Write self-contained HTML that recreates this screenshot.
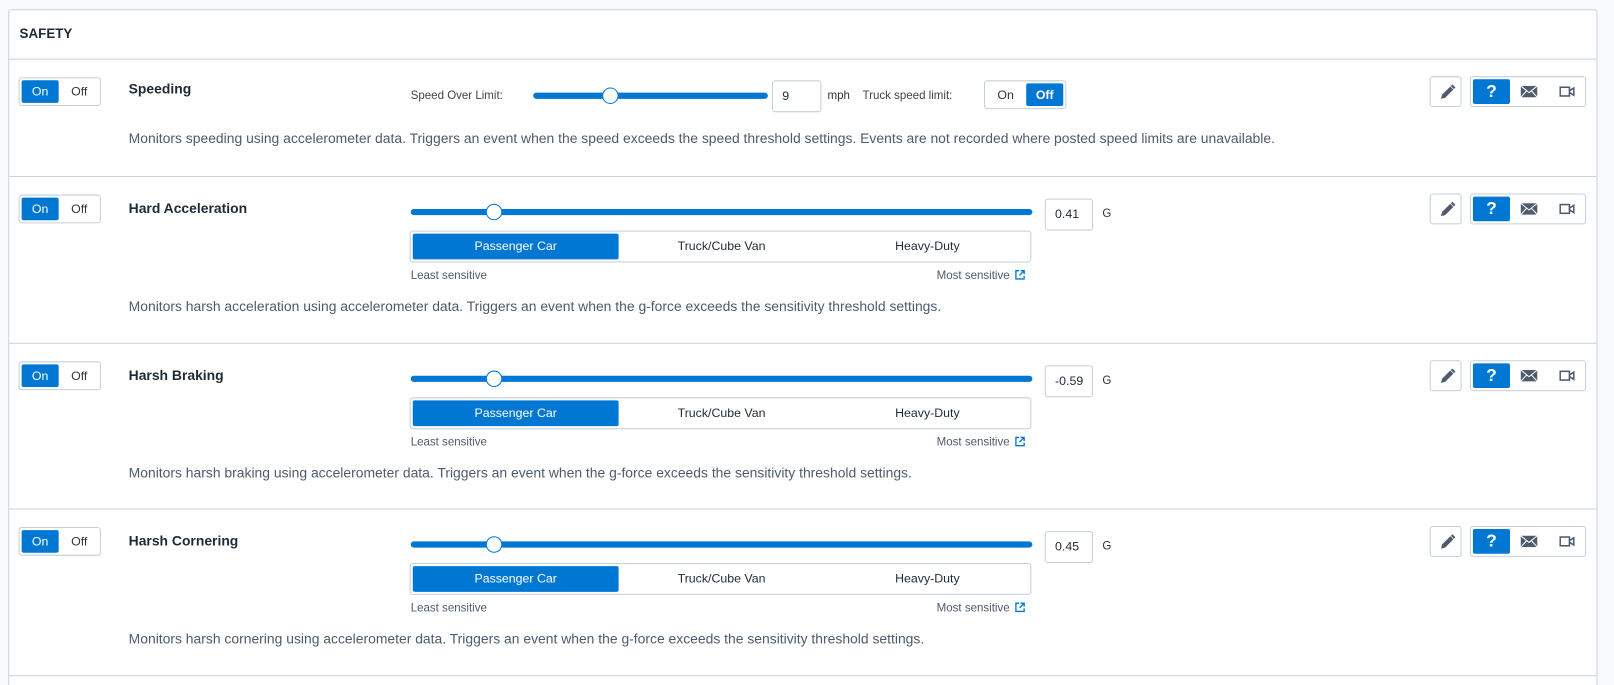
<!DOCTYPE html>
<html><head><meta charset="utf-8"><style>
*{box-sizing:border-box;margin:0;padding:0}
html,body{width:1614px;height:685px;overflow:hidden}
body{background:#f7f9fa;font-family:"Liberation Sans",sans-serif;position:relative;color:#1f2a37}
#wrap{position:absolute;left:0;top:0;width:1568px;height:666px;overflow:hidden;transform:scale(1.0293);transform-origin:0 0}
.panel{position:absolute;left:8px;top:9px;width:1544px;height:690px;background:#fff;border:1px solid #c8d3e0;border-radius:3px}
.hd{position:absolute;left:10px;top:15px;font-size:13px;font-weight:bold;color:#1f2a37}
.line{position:absolute;left:0;width:100%;height:1px;background:#c8d3e0}
.row{position:absolute;left:0;width:100%}
.tog{position:absolute;left:10px;width:80px;height:28px;border:1px solid #c3cfdb;border-radius:3px;font-size:12px}
.tog .a{position:absolute;left:2px;top:2px;width:36px;height:22px;background:#0077d3;color:#fff;border-radius:2px;text-align:center;line-height:22px}
.tog .b{position:absolute;left:40px;top:2px;width:36px;height:22px;text-align:center;line-height:22px;color:#333}
.title{position:absolute;left:117px;font-size:13.5px;font-weight:bold}
.desc{position:absolute;left:117px;font-size:13.5px;color:#4d5b6c;white-space:nowrap}
.track{position:absolute;height:6px;background:#0077d3;border-radius:3px}
.thumb{position:absolute;width:16px;height:16px;border:1.5px solid #0077d3;background:#fff;border-radius:50%}
.inp{position:absolute;border:1px solid #c3cfdb;border-radius:3px;font-size:12px;padding-left:9px;line-height:29px;height:31px}
.sm{position:absolute;font-size:11.2px;color:#333}
.seg{position:absolute;left:390px;width:604px;height:31px;border:1px solid #c3cfdb;border-radius:3px;font-size:12px}
.seg div{position:absolute;top:2px;height:25px;line-height:25px;text-align:center;width:200px}
.seg .on{left:2px;background:#0077d3;color:#fff;border-radius:2px}
.lbl{position:absolute;font-size:11.2px;color:#4d5b6c}
.ib{position:absolute;border:1px solid #c3cfdb;border-radius:3px;height:30px}
</style></head><body><div id="wrap">
<div class="panel">
<div class="hd">SAFETY</div>
<div class="line" style="top:47px"></div>
<div class="line" style="top:161px"></div>
<div class="line" style="top:323px"></div>
<div class="line" style="top:484px"></div>
<div class="line" style="top:646px"></div>
</div>
<div class="row" style="top:57px;left:8px">
<div class="tog" style="top:18px"><div class="a">On</div><div class="b">Off</div></div>
<div class="title" style="top:22px">Speeding</div>
<div class="sm" style="left:391px;top:30px;color:#444">Speed Over Limit:</div>
<div class="track" style="left:510px;top:33px;width:228px"></div>
<div class="thumb" style="left:577px;top:28px"></div>
<div class="inp" style="left:742px;top:21px;width:48px">9</div>
<div class="sm" style="left:796px;top:30px">mph</div>
<div class="sm" style="left:830px;top:30px;color:#444">Truck speed limit:</div>
<div class="tog" style="top:21px;left:948px"><div class="b" style="left:2px">On</div><div class="a" style="left:40px;font-weight:bold">Off</div></div>
<div class="desc" style="top:70px">Monitors speeding using accelerometer data. Triggers an event when the speed exceeds the speed threshold settings. Events are not recorded where posted speed limits are unavailable.</div>
</div>
<div id="rows"></div>
</div>
<script>
var data=[[171,"Hard Acceleration","0.41","Monitors harsh acceleration using accelerometer data. Triggers an event when the g-force exceeds the sensitivity threshold settings."],
[333,"Harsh Braking","-0.59","Monitors harsh braking using accelerometer data. Triggers an event when the g-force exceeds the sensitivity threshold settings."],
[494,"Harsh Cornering","0.45","Monitors harsh cornering using accelerometer data. Triggers an event when the g-force exceeds the sensitivity threshold settings."]];
var ext='<svg width="10" height="10" viewBox="0 0 10 10" style="vertical-align:-1px;margin-left:5px"><path d="M4 1H1v8h8V6" fill="none" stroke="#0077d3" stroke-width="1.3"/><path d="M5.5 1H9v3.5M9 1L4.5 5.5" fill="none" stroke="#0077d3" stroke-width="1.3"/></svg>';
var h='';
data.forEach(function(d){
h+='<div class="row" style="top:'+d[0]+'px;left:8px">'+
'<div class="tog" style="top:18px"><div class="a">On</div><div class="b">Off</div></div>'+
'<div class="title" style="top:24px">'+d[1]+'</div>'+
'<div class="track" style="left:391px;top:32px;width:604px"></div>'+
'<div class="thumb" style="left:464px;top:27px"></div>'+
'<div class="inp" style="left:1007px;top:22px;width:47px">'+d[2]+'</div>'+
'<div class="sm" style="left:1063px;top:31px">G</div>'+
'<div class="seg" style="top:53px"><div class="on">Passenger Car</div><div style="left:202px">Truck/Cube Van</div><div style="left:402px">Heavy-Duty</div></div>'+
'<div class="lbl" style="left:391px;top:91px">Least sensitive</div>'+
'<div class="lbl" style="left:902px;top:91px">Most sensitive'+ext+'</div>'+
'<div class="desc" style="top:119px">'+d[3]+'</div></div>';
});
var tops=[75,189,351,512];
tops.forEach(function(t){
h+='<div class="ib" style="left:1389px;top:'+(t-1)+'px;width:31px"><svg width="31" height="30" viewBox="0 0 31 30"><path d="M10 21l1-4 8-8 3 3-8 8z M19.5 8.5l1.5-1.5 3 3-1.5 1.5z" fill="#4d5b6c"/></svg></div>'+
'<div class="ib" style="left:1428px;top:'+(t-1)+'px;width:113px">'+
'<div style="position:absolute;left:2px;top:2px;width:36px;height:24px;background:#0077d3;border-radius:2px;color:#fff;font-weight:bold;font-size:17px;text-align:center;line-height:24px">?</div>'+
'<svg style="position:absolute;left:48px;top:8px" width="17" height="12" viewBox="0 0 17 12"><rect x="0.5" y="0.5" width="16" height="11" fill="#4d5b6c"/><path d="M0.5 0.5L8.5 7L16.5 0.5M0.5 11.5L6 5.5M16.5 11.5L11 5.5" stroke="#fff" stroke-width="1" fill="none"/></svg>'+
'<svg style="position:absolute;left:86px;top:8px" width="15" height="12" viewBox="0 0 15 12"><rect x="0.75" y="1.75" width="9" height="8.5" fill="none" stroke="#4d5b6c" stroke-width="1.5"/><path d="M10 5l4-2.5v7L10 7" fill="none" stroke="#4d5b6c" stroke-width="1.5"/></svg></div>';
});
document.getElementById('rows').innerHTML=h;
</script>
</body></html>
